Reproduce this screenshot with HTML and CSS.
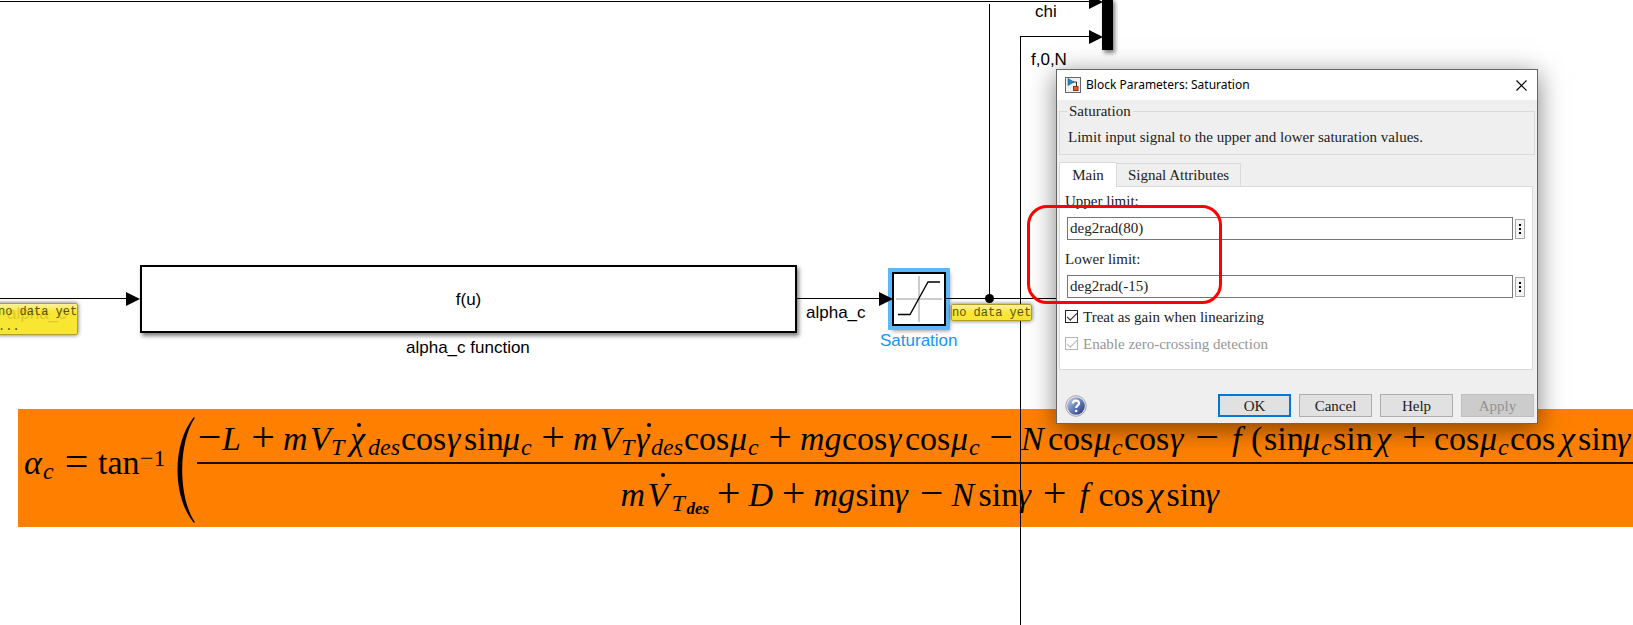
FILE: index.html
```html
<!DOCTYPE html>
<html lang="en">
<head>
<meta charset="utf-8">
<title>Block Parameters: Saturation</title>
<link rel="stylesheet" href="styles.css">
</head>
<body>
<main class="canvas">
  <section class="formula" aria-label="alpha_c formula">
    <div class="lhs"><i class="t alpha">α</i><i class="t sub c">c</i><span class="op wide">=</span><span class="t tan">tan</span><span class="sup">−1</span></div>
    <svg class="paren" viewBox="0 0 18 106" aria-hidden="true"><path d="M17 0C-5 26-5 80 17 106L17.800 105C1 80 1 26 17.800 1Z"/></svg>
    <div class="fraction">
      <div class="row numerator"><span class="op lead">−</span><i class="t l">L</i><span class="op">+</span><i class="t m">m</i><i class="t v">V</i><i class="t sub tt">T</i><i class="t chi dot">χ</i><i class="t sub des">des</i><span class="t cos">cos</span><i class="t gamma">γ</i><span class="t sin">sin</span><i class="t mu">μ</i><i class="t sub c">c</i><span class="op">+</span><i class="t m">m</i><i class="t v">V</i><i class="t sub tt">T</i><i class="t gamma dot tight">γ</i><i class="t sub des">des</i><span class="t cos">cos</span><i class="t mu">μ</i><i class="t sub c">c</i><span class="op">+</span><i class="t mg">mg</i><span class="t cos">cos</span><i class="t gamma">γ</i><span class="t cos">cos</span><i class="t mu">μ</i><i class="t sub c">c</i><span class="op">−</span><i class="t n">N</i><span class="t cos">cos</span><i class="t mu">μ</i><i class="t sub c">c</i><span class="t cos">cos</span><i class="t gamma">γ</i><span class="op">−</span><i class="t f">f</i><span class="t open">(</span><span class="t sin">sin</span><i class="t mu">μ</i><i class="t sub c">c</i><span class="t sin">sin</span><i class="t chi">χ</i><span class="op">+</span><span class="t cos">cos</span><i class="t mu">μ</i><i class="t sub c">c</i><span class="t cos">cos</span><i class="t chi">χ</i><span class="t sin">sin</span><i class="t gamma">γ</i></div>
      <div class="row denominator"><i class="t m">m</i><i class="t vdot dot high">V</i><i class="t sub tt">T</i><i class="t subsub">des</i><span class="op">+</span><i class="t d">D</i><span class="op">+</span><i class="t mg">mg</i><span class="t sin">sin</span><i class="t gamma">γ</i><span class="op">−</span><i class="t n">N</i><span class="t sin">sin</span><i class="t gamma">γ</i><span class="op">+</span><i class="t f">f</i><span class="t cos">cos</span><i class="t chi">χ</i><span class="t sin">sin</span><i class="t gamma">γ</i></div>
    </div>
  </section>

  <div class="node mux"></div>
  <div class="node function">f(u)</div>
  <div class="node saturation">
    <svg viewBox="0 0 50 50" aria-hidden="true"><path d="M25 2V48M2 25H48" stroke="#999"/><path d="M4 40.500H16L34 8H46" stroke="#000" stroke-width="1.300"/></svg>
  </div>

  <svg class="wires" aria-hidden="true">
    <g fill="none" stroke="#000" shape-rendering="crispEdges">
      <path d="M0 1.500H1090M989.500 4V298M1090 36.500H1020.500V625M0 298.500H127M797 298.500H880M946 298.500H1057"/>
    </g>
    <path d="M1089 -5L1103 2L1089 9ZM1089 30L1103 37L1089 44ZM126 292L140 299L126 306ZM879 292L893 299L879 306Z"/>
    <circle cx="989.500" cy="298.500" r="4.500"/>
  </svg>

  <span class="label name-function">alpha_c function</span>
  <span class="label signal-alpha">alpha_c</span>
  <span class="label name-saturation">Saturation</span>
  <span class="label signal-chi">chi</span>
  <span class="label signal-fn">f,0,N</span>
  <div class="tip tip-left"><span class="ghost">alpha_c</span>no data yet<br>...</div>
  <div class="tip tip-right">no data yet</div>

  <form class="dialog" role="dialog" aria-labelledby="title">
    <header class="titlebar">
      <svg class="app" viewBox="0 0 16 16" aria-hidden="true"><rect x=".5" y=".5" width="15" height="15" fill="#f1f1f1" stroke="#666"/><path d="M8 5H11.500V9" fill="none" stroke="#333"/><path d="M3 1.500L9 5L3 8.500Z" fill="#2388bd" stroke="#155c87" stroke-width=".6"/><rect x="8.500" y="9.500" width="4.500" height="4" fill="#e75d28" stroke="#9c2f10"/></svg>
      <h1 id="title">Block Parameters: Saturation</h1>
      <button type="button" class="close" aria-label="Close"><svg viewBox="0 0 11 11"><path d="M.5.5L10.500 10.500M10.500.5L.5 10.500" fill="none" stroke="#000" stroke-width="1.200"/></svg></button>
    </header>
    <fieldset class="about">
      <legend>Saturation</legend>
      <p>Limit input signal to the upper and lower saturation values.</p>
    </fieldset>
    <div class="tabs" role="tablist">
      <button type="button" class="tab active" role="tab" aria-selected="true">Main</button>
      <button type="button" class="tab" role="tab" aria-selected="false">Signal Attributes</button>
    </div>
    <div class="panel" role="tabpanel">
      <label for="upper">Upper limit:</label>
      <div class="field"><input id="upper" type="text" value="deg2rad(80)"><button type="button" class="more" aria-label="Upper limit options"><i></i><i></i><i></i></button></div>
      <label for="lower">Lower limit:</label>
      <div class="field"><input id="lower" type="text" value="deg2rad(-15)"><button type="button" class="more" aria-label="Lower limit options"><i></i><i></i><i></i></button></div>
      <label class="check"><input type="checkbox" checked>Treat as gain when linearizing</label>
      <label class="check off"><input type="checkbox" checked disabled>Enable zero-crossing detection</label>
    </div>
    <footer class="actions">
      <button type="button" class="info" aria-label="About this block">
        <svg viewBox="0 0 22 22"><defs><linearGradient id="ball" x1="0" y1="0" x2="1" y2="1"><stop offset="0" stop-color="#c9d4ee"/><stop offset=".45" stop-color="#6e86c0"/><stop offset="1" stop-color="#1c2f78"/></linearGradient></defs><circle cx="11" cy="11" r="10.300" fill="#e6e6e6" stroke="#999" stroke-width=".8"/><circle cx="11" cy="11" r="8.800" fill="url(#ball)"/><path d="M7.800 8.500C8 4.500 14.500 4.800 14 8.600C13.700 10.600 11.200 10.600 11.200 13" fill="none" stroke="#fff" stroke-width="2.200"/><circle cx="11.200" cy="16" r="1.300" fill="#fff"/></svg>
      </button>
      <button type="button" class="btn primary">OK</button>
      <button type="button" class="btn">Cancel</button>
      <button type="button" class="btn">Help</button>
      <button type="button" class="btn" disabled>Apply</button>
    </footer>
  </form>
  <div class="highlight"></div>
</main>
</body>
</html>
```
FILE: styles.css
```css
* { box-sizing: border-box; }
body { margin: 0; background: #fff; color: #000; font-family: "Liberation Sans", Arial, sans-serif; }
button, input { font: inherit; color: inherit; }
.canvas { position: relative; min-height: 100vh; overflow: hidden; }

/* Diagram */
.wires { position: absolute; inset: 0; width: 100%; height: 100%; }
.node { position: absolute; background: #fff; border: 2px solid #000; box-shadow: 2px 3px 4px rgba(0,0,0,.5); }
.mux { left: 1102px; top: -2px; width: 11px; height: 52px; background: #000; }
.function { left: 140px; top: 265px; width: 657px; height: 68px; display: grid; place-items: center; padding-top: 2px; font-size: 17px; }
.saturation { left: 892px; top: 272px; width: 54px; height: 54px; box-shadow: 0 0 0 4px #5db8fb, 2px 3px 4px 2px rgba(0,0,0,.4); }
.saturation svg { display: block; width: 50px; height: 50px; fill: none; }
.label { position: absolute; font-size: 17px; line-height: 20px; white-space: nowrap; }
.name-function { left: 406px; top: 338px; }
.signal-alpha { left: 806px; top: 303px; }
.name-saturation { left: 880px; top: 331px; color: #1495f7; }
.signal-chi { left: 1035px; top: 2px; }
.signal-fn { left: 1031px; top: 50px; }
.tip { position: absolute; font-family: "Liberation Mono", "Courier New", monospace; font-size: 12px; line-height: 16px; color: #5d5500; white-space: nowrap; background: linear-gradient(#fbf2a0, #f8e632 8px); border: 1px solid #b59e20; border-radius: 2px; box-shadow: 0 0 4px rgba(0,0,0,.6); }
.tip-left { left: -4px; top: 303px; width: 82px; height: 32px; padding: 1px; line-height: 15px; }
.tip-right { left: 951px; top: 304px; width: 81px; height: 17px; }
.ghost { position: absolute; left: 10px; top: 0; font: 17px/20px "Liberation Sans", sans-serif; color: #000; opacity: .12; }

/* Formula */
.formula { position: absolute; left: 18px; right: 0; top: 409px; height: 118px; overflow: hidden; display: flex; align-items: flex-start; padding-left: 6px; background: #ff8000; font-family: "Liberation Serif", "Times New Roman", serif; font-size: 34px; line-height: 40px; white-space: nowrap; }
.lhs { flex: none; display: flex; width: 153px; padding-top: 34px; }
.sup { font-size: 24px; line-height: 30px; }
.paren { flex: none; width: 18px; height: 106px; margin-top: 8px; }
.fraction { flex: none; width: 1449px; margin-left: 2px; }
.row { display: flex; }
.numerator { height: 55px; padding-top: 10px; border-bottom: 2px solid #1a0d00; }
.denominator { justify-content: center; padding-top: 11px; }
.t { flex: none; position: relative; }
.sub { top: 6px; font-size: 24px; line-height: 44px; }
.subsub { width: 22px; padding-top: 12px; font-size: 17px; font-weight: bold; line-height: 44px; }
.op { flex: none; width: 40px; text-align: center; font-size: 42px; line-height: 36px; }
.op.lead { width: 25px; }
.op.wide { width: 43px; }
.alpha { width: 19px; }
.tan { width: 42px; }
.l { width: 21px; }
.m { width: 27px; }
.mg { width: 42px; }
.v { width: 21px; }
.vdot { width: 24px; }
.tt { width: 15px; }
.chi { width: 22px; padding-left: 4px; }
.des { width: 33px; }
.cos { width: 46px; }
.sin { width: 39px; }
.gamma { width: 17px; }
.gamma.tight { width: 15px; }
.mu { width: 18px; }
.c { width: 12px; }
.n { width: 27px; }
.d { width: 25px; }
.f { width: 24px; padding-left: 5px; }
.open { width: 13px; }
.dot::before { content: ""; position: absolute; left: 11px; top: 4px; width: 4px; height: 4px; border-radius: 50%; background: #000; }
.dot.high::before { left: 13px; top: -2px; }

/* Dialog */
.dialog { position: absolute; left: 1056px; top: 69px; width: 482px; display: flex; flex-direction: column; background: #efefef; border: 1px solid #666; box-shadow: 0 5px 24px rgba(0,0,0,.5); font-family: "Liberation Serif", "Times New Roman", serif; font-size: 15px; line-height: 20px; color: #222; }
.titlebar { display: flex; align-items: center; height: 30px; padding: 0 10px 0 8px; background: #fff; }
.app { width: 16px; height: 16px; }
.titlebar h1 { flex: 1; margin: 0 0 0 5px; font: 12px/20px "Noto Sans", sans-serif; color: #000; }
.close { display: flex; padding: 0; border: 0; background: none; }
.close svg { width: 11px; height: 11px; }
.about { margin: 1px 2px 0; padding: 0 8px 7px; height: 54px; border: 1px solid #dadada; min-width: 0; }
.about legend { padding: 0 2px; margin-left: -1px; }
.about p { margin: 6px 0 0; white-space: nowrap; }
.tabs { display: flex; align-items: flex-end; height: 31px; margin-left: 2px; }
.tab { height: 23px; padding: 0; width: 124px; border: 1px solid #dadada; border-left: 0; border-bottom: 0; background: #efefef; line-height: 22px; }
.tab.active { width: 58px; height: 25px; margin-bottom: -1px; border-left: 1px solid #dadada; background: #fff; position: relative; }
.panel { margin: 0 4px 0 2px; height: 184px; padding: 4px 7px 0 5px; border: 1px solid #dadada; background: #fff; display: flex; flex-direction: column; }
.panel > label { height: 20px; }
.field { display: flex; align-items: center; gap: 2px; padding: 6px 0 8px 2px; }
.field input { flex: 1; min-width: 0; height: 23px; padding: 0 2px; border: 1px solid #777; border-radius: 0; background: #fff; }
.field + label { margin-top: 1px; }
.more { width: 10px; height: 20px; padding: 0; border: 1px solid #aaa; background: #f3f3f3; display: flex; flex-direction: column; align-items: center; justify-content: center; gap: 2px; }
.more i { width: 2px; height: 2px; background: #000; }
.panel .check { display: flex; align-items: center; gap: 5px; height: 27px; }
.panel .field + .check { margin-top: -3px; }
.check input { appearance: none; margin: 0; width: 13px; height: 13px; border: 1px solid #222; display: grid; place-items: center; }
.check input::before { content: ""; width: 9px; height: 4px; margin-top: -3px; border: solid #222; border-width: 0 0 1px 1px; transform: rotate(-45deg); }
.off { color: #969696; }
.off input, .off input::before { border-color: #b5b5b5; }
.actions { display: flex; align-items: center; gap: 8px; padding: 24px 3px 6px 8px; }
.info { display: flex; margin-right: auto; padding: 0; border: 0; background: none; }
.info svg { width: 22px; height: 22px; }
.btn { width: 73px; height: 23px; padding: 0; border: 1px solid #adadad; background: #e1e1e1; line-height: 20px; }
.btn.primary { border: 2px solid #0078d7; }
.btn:disabled { background: #ccc; border-color: #bfbfbf; color: #929292; }
.highlight { position: absolute; left: 1027px; top: 205px; width: 195px; height: 99px; border: 3px solid #f00; border-radius: 20px; pointer-events: none; }
```
